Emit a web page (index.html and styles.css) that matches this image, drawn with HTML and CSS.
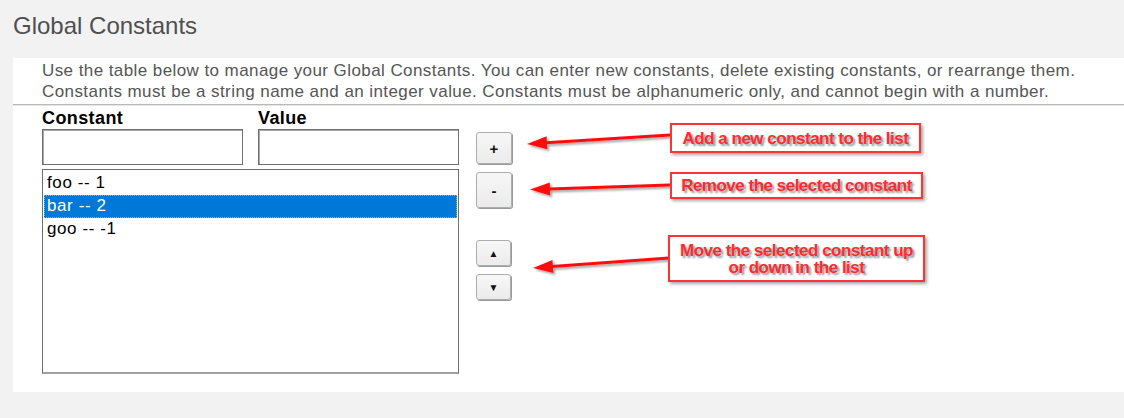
FILE: index.html
```html
<!DOCTYPE html>
<html lang="en">
<head>
<meta charset="utf-8">
<title>Global Constants</title>
<link rel="stylesheet" href="styles.css">
</head>
<body>
<h1 class="title">Global Constants</h1>
<div class="panel">
  <p class="desc">Use the table below to manage your Global Constants. You can enter new constants, delete existing constants, or rearrange them.<br>Constants must be a string name and an integer value. Constants must be alphanumeric only, and cannot begin with a number.</p>
  <div class="editor">
    <div class="fields">
      <div class="labels">
        <label class="label">Constant</label>
        <label class="label">Value</label>
      </div>
      <div class="inputs">
        <input class="field" type="text">
        <input class="field" type="text">
      </div>
      <div class="list">
        <div class="item">foo -- 1</div>
        <div class="item selected">bar -- 2</div>
        <div class="item">goo -- -1</div>
      </div>
    </div>
    <div class="buttons">
      <button class="btn btn-add">+</button>
      <button class="btn btn-remove">-</button>
      <button class="btn btn-up">&#9650;</button>
      <button class="btn btn-down">&#9660;</button>
    </div>
  </div>
</div>

<svg class="arrows" width="1124" height="418" viewBox="0 0 1124 418">
  <defs>
    <filter id="sh" x="-10%" y="-50%" width="120%" height="200%">
      <feDropShadow dx="2" dy="2" stdDeviation="1.2" flood-color="#000" flood-opacity="0.35"/>
    </filter>
  </defs>
  <g filter="url(#sh)" fill="#ff0f0f" stroke="#ff0f0f">
    <line x1="670" y1="135" x2="546" y2="142.8" stroke-width="3"/>
    <polygon points="527,144 547.4,149.2 546.6,136.2" stroke="none"/>
    <line x1="670" y1="185" x2="549" y2="188.9" stroke-width="3"/>
    <polygon points="530,189.5 550.2,195.4 549.8,182.4" stroke="none"/>
    <line x1="669" y1="258" x2="552" y2="266.6" stroke-width="3"/>
    <polygon points="533,268 553.4,273 552.5,260" stroke="none"/>
  </g>
</svg>

<div class="note note-add">Add a new constant to the list</div>
<div class="note note-remove">Remove the selected constant</div>
<div class="note note-move">Move the selected constant up<br>or down in the list</div>
</body>
</html>
```

FILE: styles.css
```css
html, body {
  margin: 0;
  padding: 0;
}
body {
  background: #f2f2f2;
  font-family: "Liberation Sans", Arial, sans-serif;
  width: 1124px;
  height: 418px;
  position: relative;
  overflow: hidden;
}
.title {
  margin: 12px 0 18px 13px;
  font-size: 24px;
  line-height: 28px;
  font-weight: normal;
  color: #4f4f4f;
}
.panel {
  margin-left: 13px;
  background: #fff;
  height: 334px;
}
.desc {
  margin: 0;
  padding: 2px 0 0 29px;
  font-size: 17px;
  line-height: 21px;
  letter-spacing: 0.42px;
  color: #555;
  height: 44px;
  border-bottom: 1px solid #b9b9b9;
  box-shadow: 0 1px 0 #e4e4e4;
}
.editor {
  display: flex;
  gap: 17px;
  padding-left: 29px;
}
.fields {
  width: 417px;
}
.labels {
  display: flex;
  gap: 15px;
  margin-top: 3px;
}
.label {
  width: 201px;
  font-size: 18px;
  line-height: 20px;
  letter-spacing: 0.4px;
  font-weight: bold;
  color: #000;
}
.inputs {
  display: flex;
  gap: 15px;
  margin-top: 1px;
}
.field {
  width: 201px;
  height: 36px;
  box-sizing: border-box;
  margin: 0;
  border: 1px solid #707070;
  box-shadow: inset 1px 1px 0 #a8a8a8;
  background: #fff;
  outline: none;
}
.list {
  margin-top: 4px;
  height: 205px;
  box-sizing: border-box;
  border: 1px solid #6e6e6e;
  border-bottom: 2px solid #a0a0a0;
  padding: 2px 1px 0;
}
.item {
  height: 23px;
  line-height: 22px;
  font-size: 17px;
  letter-spacing: 0.6px;
  color: #000;
  padding-left: 3px;
  box-sizing: border-box;
}
.item.selected {
  background: #0078d7;
  color: #fff;
  outline: 1px dotted #9ab;
  outline-offset: -1px;
}
.buttons {
  display: flex;
  flex-direction: column;
  padding-top: 27px;
}
.btn {
  box-sizing: border-box;
  margin: 0;
  padding: 0;
  border: 1px solid #adadad;
  border-radius: 3px;
  background: linear-gradient(#f7f7f7, #ebebeb);
  box-shadow: 1px 1px 0 #9a9a9a;
  font-family: "Liberation Sans", Arial, sans-serif;
  font-weight: bold;
  color: #111;
}
.btn-add {
  width: 36px;
  height: 32px;
  font-size: 15px;
}
.btn-remove {
  width: 36px;
  height: 36px;
  margin-top: 8px;
  font-size: 15px;
}
.btn-up {
  width: 35px;
  height: 26px;
  margin-top: 32px;
  font-size: 10px;
}
.btn-down {
  width: 35px;
  height: 26px;
  margin-top: 8px;
  font-size: 10px;
}
.arrows {
  position: absolute;
  left: 0;
  top: 0;
  pointer-events: none;
}
.note {
  position: absolute;
  box-sizing: border-box;
  background: #fff;
  border: 2px solid #ff3333;
  box-shadow: 2px 2px 3px rgba(0, 0, 0, 0.35);
  display: flex;
  align-items: center;
  justify-content: center;
  text-align: center;
  font-family: "Liberation Sans", Arial, sans-serif;
  font-weight: bold;
  font-size: 17px;
  letter-spacing: -0.5px;
  color: #ff2b2b;
  text-shadow: 2px 2px 2px rgba(40, 40, 70, 0.5);
}
.note-add {
  left: 670px;
  top: 123px;
  width: 251px;
  height: 30px;
  padding-top: 1px;
}
.note-remove {
  left: 670px;
  top: 172px;
  width: 253px;
  height: 27px;
  padding-top: 1px;
}
.note-move {
  left: 668px;
  top: 235px;
  width: 257px;
  height: 47px;
  line-height: 17px;
}
```
